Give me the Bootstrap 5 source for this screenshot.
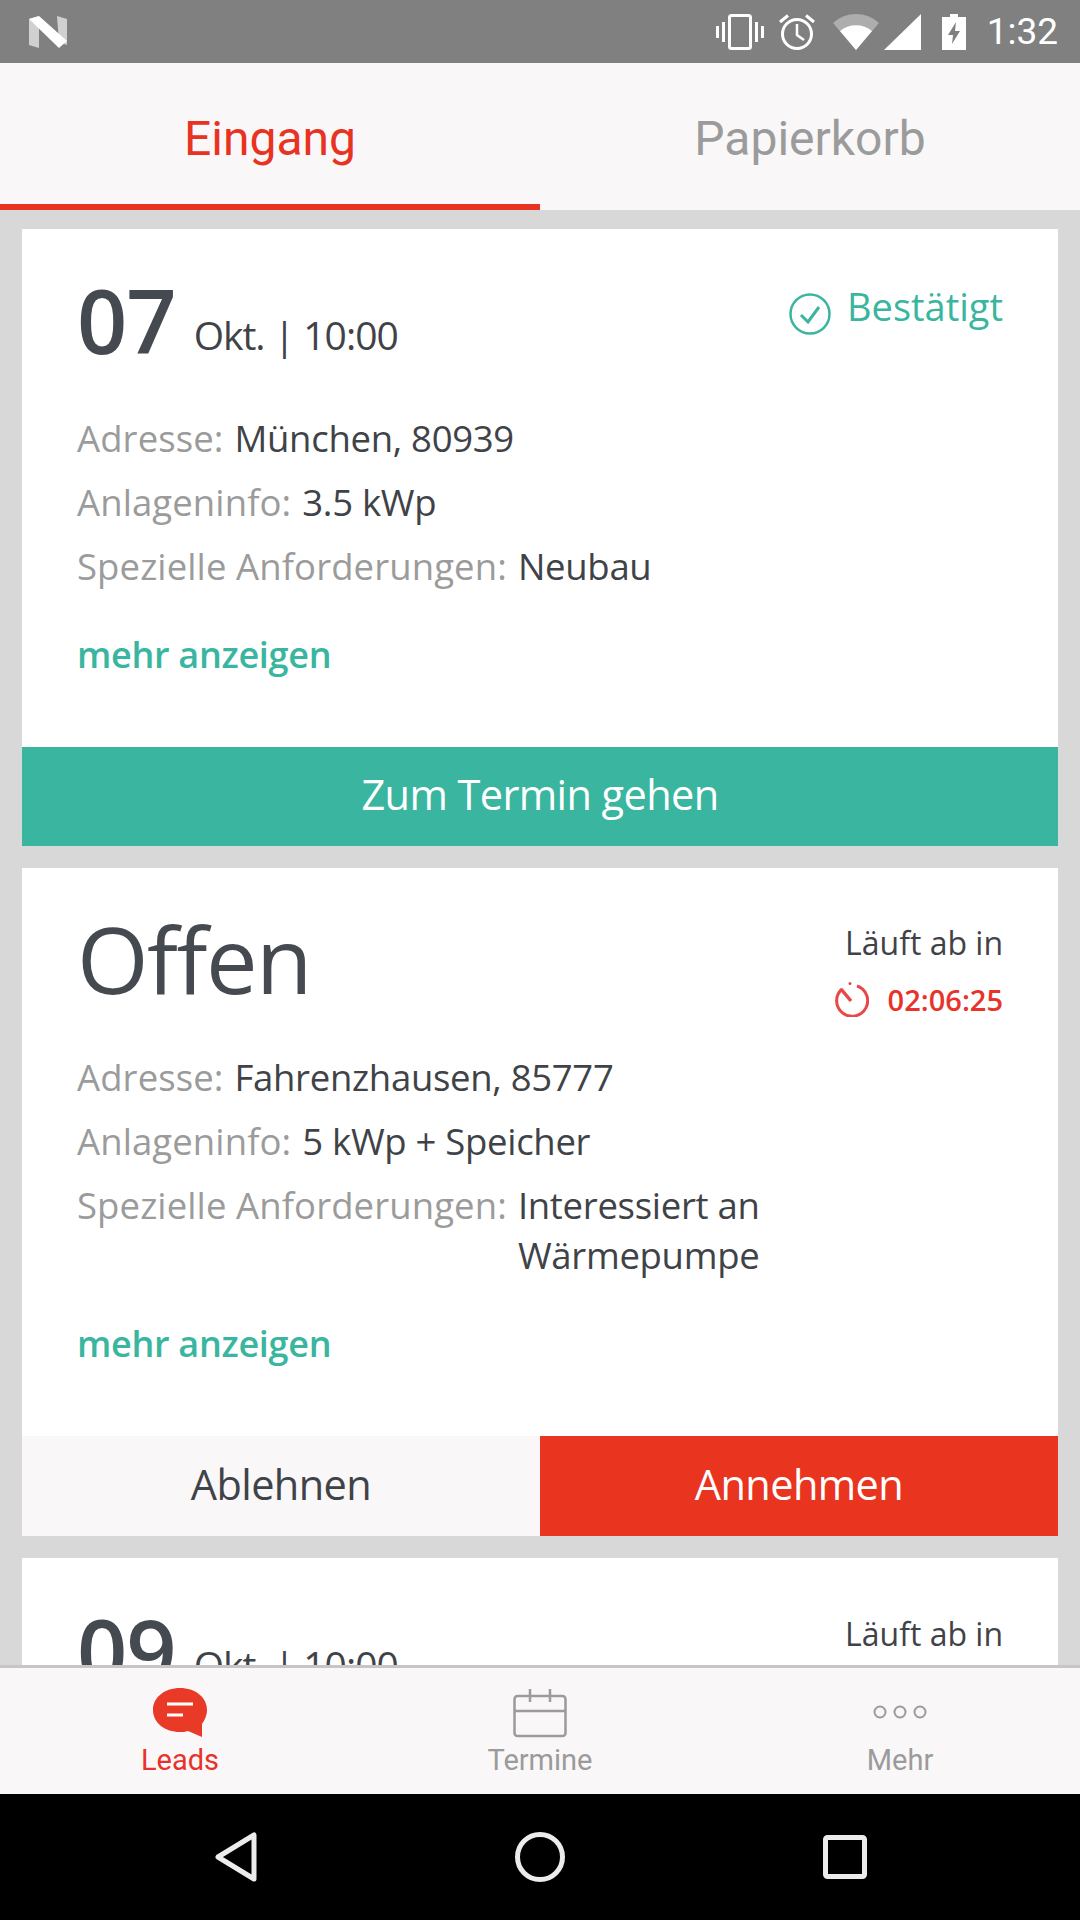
<!DOCTYPE html>
<html lang="de">
<head>
  <meta charset="UTF-8">
  <title>Leads</title>
  <link href="https://cdn.jsdelivr.net/npm/bootstrap@5.3.3/dist/css/bootstrap.min.css" rel="stylesheet">
  <style>
    html, body { margin: 0; height: 1920px; overflow: hidden; }
    body { font-family: "Open Sans", "Noto Sans", sans-serif; color: #3f4348; background: #d8d8d8; }
    .app-shell { width: 1080px; height: 1920px; }

    /* status bar */
    .status-bar { height: 63px; background: #808080; color: #fff; padding: 0 22px 0 29px; }
    .status-icons { gap: 17px; }
    .status-vibrate { margin-right: -3px; }
    .status-signal { margin-left: -12px; }
    .status-battery { margin-left: 4px; }
    .status-time { font-family: Roboto, sans-serif; font-size: 37px; line-height: 1; margin-left: 4px; }

    /* tabs */
    .tab-bar { height: 147px; background: #f9f7f8; }
    .tab-item { font-family: Roboto, sans-serif; font-size: 48px; color: #9b9b9b; border-bottom: 6px solid transparent; text-decoration: none; padding-top: 11px; }
    .tab-item.is-active { color: #e83323; border-bottom-color: #e83323; }

    /* list */
    .lead-list { padding: 19px 22px 0; gap: 22px; overflow: hidden; min-height: 0; }
    .lead-card { border: 0; border-radius: 0; flex-shrink: 0; }
    .lead-body { padding: 0 55px 67px; }
    .lead-head { height: 184px; }
    .lead-when { padding-top: 47px; }
    .lead-when-late { padding-top: 48px; }
    .lead-day { font-size: 88px; font-weight: 600; line-height: 1; color: #454a51; letter-spacing: -1px; }
    .lead-date { font-size: 39px; line-height: 1; margin-left: 18px; letter-spacing: -1px; position: relative; top: -4px; }
    .lead-open { font-size: 92px; line-height: 1; color: #454a51; letter-spacing: -1.5px; padding-top: 45px; }
    .lead-status { font-size: 38px; color: #3ab5a0; line-height: 1; padding-top: 58px; }
    .lead-status svg { margin-top: 6px; }
    .expire-box { padding-top: 59px; }
    .expire-box-late { padding-top: 60px; }
    .expire-label { font-size: 32px; line-height: 1; color: #3f4348; }
    .expire-time { font-size: 29px; font-weight: 600; line-height: 1; color: #e8332a; gap: 19px; margin-top: 22px; }
    .info-row { font-size: 36.5px; line-height: 50px; margin-bottom: 14px; letter-spacing: .1px; }
    .info-value { letter-spacing: -.3px; }
    .info-label { color: #9b9b9b; margin-right: 11px; white-space: nowrap; }
    .more-link { display: block; font-size: 36px; font-weight: 600; color: #3ab5a0; text-decoration: none; line-height: 50px; margin-top: 39px; letter-spacing: -.3px; }
    .lead-btn { height: 100px; border: 0; border-radius: 0; font-size: 41.5px; line-height: 1; padding: 0 0 3px; letter-spacing: -.6px; }
    .btn-green { background: #3ab5a0; color: #fff; height: 99px; }
    .btn-plain { background: #f9f7f8; color: #3f4348; }
    .btn-red { background: #e93420; color: #fff; }

    /* bottom nav */
    .bottom-nav { height: 129px; flex-shrink: 0; background: #f9f7f8; border-top: 3px solid #c6c6c6; }
    .nav-entry { font-family: Roboto, sans-serif; font-size: 29px; line-height: 1; color: #9b9b9b; text-decoration: none; width: 360px; padding-top: 20px; }
    .nav-entry.is-active { color: #e8332a; }
    .nav-entry svg { margin-bottom: 8px; }
    .system-bar { height: 126px; flex-shrink: 0; background: #000; }
  </style>
</head>
<body>
<div class="app-shell d-flex flex-column">

  <!-- status bar -->
  <div class="status-bar d-flex align-items-center justify-content-between flex-shrink-0">
    <svg width="38" height="32" viewBox="0 0 38 32">
      <path d="M0 3 L10 0 V32 L0 29 Z" fill="#d0d0d0"/>
      <path d="M28 0 L38 3 V29 L30 26 Z" fill="#d0d0d0"/>
      <path d="M0 3 L10 0 L38 25 L30 32 Z" fill="#fff"/>
    </svg>
    <div class="status-icons d-flex align-items-center">
      <svg width="48" height="36" viewBox="0 0 48 36" fill="none" class="status-vibrate">
        <rect x="13.5" y="1.5" width="21" height="33" rx="2" stroke="#fff" stroke-width="3"/>
        <path d="M1.5 12 V24 M7.5 8 V28 M40.5 8 V28 M46.5 12 V24" stroke="#fff" stroke-width="3"/>
      </svg>
      <svg width="38" height="38" viewBox="0 0 38 38" fill="none" stroke="#fff" stroke-width="3">
        <circle cx="19" cy="21" r="14.5"/>
        <path d="M19 11 V22 L26 27" stroke-width="2.5"/>
        <path d="M2 9 L10 2.5 M36 9 L28 2.5"/>
      </svg>
      <svg width="46" height="36" viewBox="0 0 46 36">
        <path d="M0 9 A34 34 0 0 1 46 9 L23 36 Z" fill="#adadad"/>
        <path d="M7 17 A25 25 0 0 1 39 17 L23 36 Z" fill="#fff"/>
      </svg>
      <svg width="37" height="36" viewBox="0 0 37 36" class="status-signal"><path d="M37 0 V36 H0 Z" fill="#fff"/></svg>
      <svg width="24" height="36" viewBox="0 0 24 36" class="status-battery">
        <path d="M8 0 H16 V3 H24 V36 H0 V3 H8 Z M14 8 L6 21 H11 L10 30 L18 17 H13 Z" fill="#fff" fill-rule="evenodd"/>
      </svg>
      <span class="status-time">1:32</span>
    </div>
  </div>

  <!-- tabs -->
  <nav class="tab-bar d-flex flex-shrink-0">
    <a class="tab-item is-active w-50 d-flex align-items-center justify-content-center" href="#">Eingang</a>
    <a class="tab-item w-50 d-flex align-items-center justify-content-center" href="#">Papierkorb</a>
  </nav>

  <!-- lead list -->
  <main class="lead-list d-flex flex-column flex-grow-1">

    <section class="card lead-card">
      <div class="lead-body">
        <div class="lead-head d-flex justify-content-between">
          <div class="lead-when d-flex align-items-baseline">
            <span class="lead-day">07</span>
            <span class="lead-date">Okt. | 10:00</span>
          </div>
          <div class="lead-status d-flex align-items-start gap-3">
            <svg width="42" height="42" viewBox="0 0 42 42" fill="none" stroke="#3ab5a0" stroke-width="2.5">
              <circle cx="21" cy="21" r="19.5"/>
              <path d="M12 22 L19 29 L30 14" stroke-width="3"/>
            </svg>
            <span>Bestätigt</span>
          </div>
        </div>
        <div class="info-row d-flex"><span class="info-label">Adresse:</span><span class="info-value">München, 80939</span></div>
        <div class="info-row d-flex"><span class="info-label">Anlageninfo:</span><span class="info-value">3.5 kWp</span></div>
        <div class="info-row d-flex"><span class="info-label">Spezielle Anforderungen:</span><span class="info-value">Neubau</span></div>
        <a class="more-link" href="#">mehr anzeigen</a>
      </div>
      <button class="btn lead-btn btn-green w-100" type="button">Zum Termin gehen</button>
    </section>

    <section class="card lead-card">
      <div class="lead-body">
        <div class="lead-head d-flex justify-content-between">
          <div class="lead-open">Offen</div>
          <div class="expire-box d-flex flex-column align-items-end">
            <span class="expire-label">Läuft ab in</span>
            <span class="expire-time d-flex align-items-center">
              <svg width="36" height="36" viewBox="0 0 36 36" fill="none" stroke="#e8484a" stroke-width="3">
                <path d="M24 5 A15.5 15.5 0 1 1 9 8"/>
                <path d="M8 8 L18 20" stroke-width="3.5"/>
                <circle cx="17" cy="2.5" r="1.5" fill="#e8484a" stroke="none"/>
              </svg>
              02:06:25
            </span>
          </div>
        </div>
        <div class="info-row d-flex"><span class="info-label">Adresse:</span><span class="info-value">Fahrenzhausen, 85777</span></div>
        <div class="info-row d-flex"><span class="info-label">Anlageninfo:</span><span class="info-value">5 kWp + Speicher</span></div>
        <div class="info-row d-flex"><span class="info-label">Spezielle Anforderungen:</span><span class="info-value">Interessiert an<br>Wärmepumpe</span></div>
        <a class="more-link" href="#">mehr anzeigen</a>
      </div>
      <div class="d-flex">
        <button class="btn lead-btn btn-plain w-50" type="button">Ablehnen</button>
        <button class="btn lead-btn btn-red w-50" type="button">Annehmen</button>
      </div>
    </section>

    <section class="card lead-card flex-grow-1">
      <div class="lead-body">
        <div class="lead-head d-flex justify-content-between">
          <div class="lead-when-late d-flex align-items-baseline">
            <span class="lead-day">09</span>
            <span class="lead-date">Okt. | 10:00</span>
          </div>
          <div class="expire-box-late"><span class="expire-label">Läuft ab in</span></div>
        </div>
      </div>
    </section>
  </main>

  <!-- bottom nav -->
  <nav class="bottom-nav d-flex">
    <a class="nav-entry is-active d-flex flex-column align-items-center" href="#">
      <svg width="54" height="50" viewBox="0 0 54 50">
        <path d="M27 0 C42 0 54 9 54 22 C54 28 51 33 49 36 L49 49 L35 43 C32 44 30 44 27 44 C12 44 0 35 0 22 C0 9 12 0 27 0 Z" fill="#e93a28"/>
        <path d="M14 16 H40 M14 27 H30" stroke="#fff" stroke-width="3"/>
      </svg>
      Leads
    </a>
    <a class="nav-entry d-flex flex-column align-items-center" href="#">
      <svg width="54" height="50" viewBox="0 0 54 50" fill="none" stroke="#9b9b9b" stroke-width="2.5">
        <rect x="1.5" y="8" width="51" height="40" rx="3"/>
        <path d="M1.5 23 H52.5 M17 1 V14 M37 1 V14"/>
      </svg>
      Termine
    </a>
    <a class="nav-entry d-flex flex-column align-items-center" href="#">
      <svg width="54" height="50" viewBox="0 0 54 50" fill="none" stroke="#9b9b9b" stroke-width="2">
        <circle cx="7" cy="24" r="5.5"/><circle cx="27" cy="24" r="5.5"/><circle cx="47" cy="24" r="5.5"/>
      </svg>
      Mehr
    </a>
  </nav>

  <!-- android nav -->
  <div class="system-bar d-flex align-items-center">
    <svg width="1080" height="126" viewBox="0 0 1080 126" fill="none" stroke="#ececec" stroke-width="5" stroke-linejoin="round">
      <path d="M254 41 V85 L218 63 Z"/>
      <circle cx="540" cy="63" r="22.5"/>
      <rect x="825.5" y="43.5" width="39" height="39" rx="2"/>
    </svg>
  </div>
</div>
<script src="https://cdn.jsdelivr.net/npm/bootstrap@5.3.3/dist/js/bootstrap.bundle.min.js"></script>
</body>
</html>
